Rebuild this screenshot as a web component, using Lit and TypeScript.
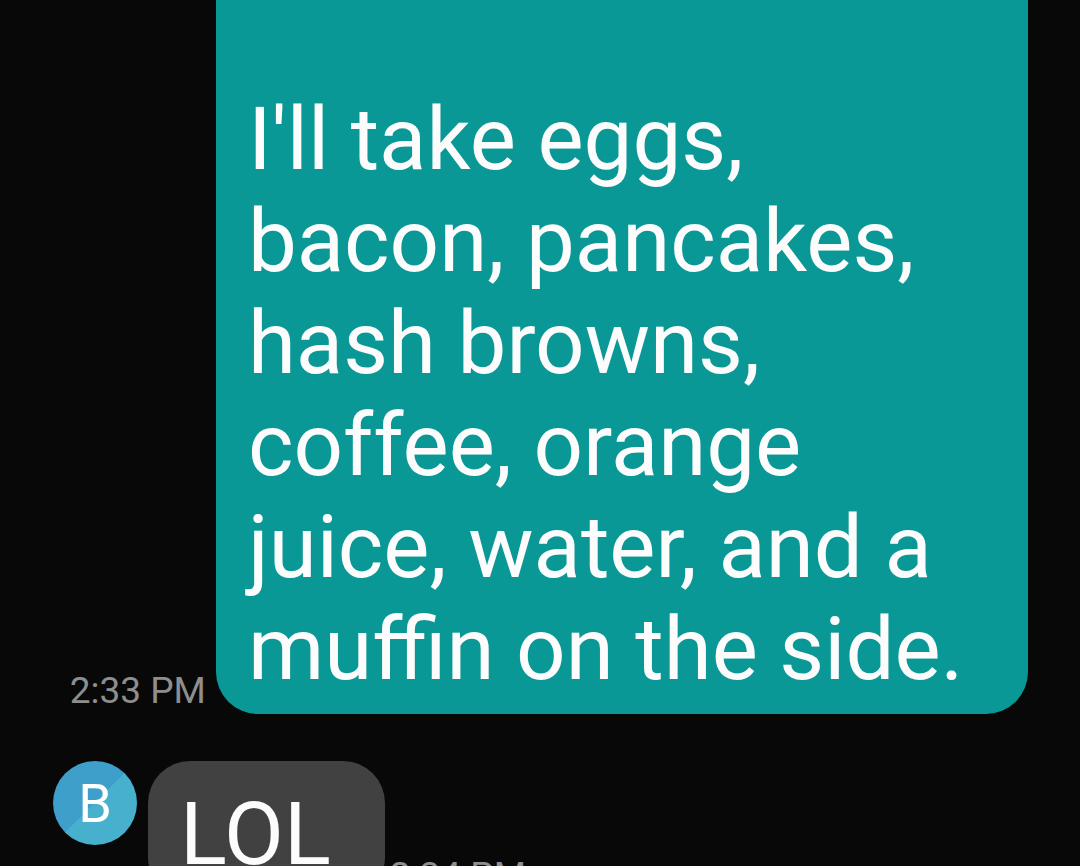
import { LitElement, html, css } from "lit";
import { customElement } from "lit/decorators.js";

@customElement("app-root")
export class AppRoot extends LitElement {
  static styles = css`
    :host {
      display: block;
      height: 100vh;
      overflow: hidden;
      background: #080808;
      font-family: Roboto, sans-serif;
    }
    .thread {
      display: flex;
      flex-direction: column;
      gap: 47px;
    }
    .row {
      display: flex;
    }
    .sent {
      justify-content: flex-end;
      align-items: flex-end;
      gap: 10px;
      padding-right: 52px;
    }
    .received {
      align-items: flex-start;
      padding-left: 53px;
    }
    .bubble {
      box-sizing: border-box;
      margin: 0;
      color: #fcfcfc;
      font-size: 87px;
      line-height: 102px;
    }
    .sent .bubble {
      width: 79%;
      padding: 88px 32px 14px;
      background: #0a9896;
      border-radius: 0 0 42px 42px;
    }
    .received .bubble {
      margin: 0 5px 0 11px;
      padding: 22px 54px 14px 32px;
      background: #414141;
      border-radius: 42px;
    }
    time {
      padding-bottom: 1px;
      color: #8e8e8e;
      font-size: 37px;
      line-height: 44px;
      white-space: nowrap;
    }
    .received time {
      align-self: flex-end;
    }
    .avatar {
      display: flex;
      align-items: center;
      justify-content: center;
      width: 84px;
      height: 84px;
      border-radius: 50%;
      color: #fff;
      font-size: 54px;
      background: linear-gradient(135deg, #3d9fca 50%, #46b0cd 50%);
    }
  `;

  render() {
    return html`
      <main class="thread">
        <article class="row sent">
          <time>2:33 PM</time>
          <p class="bubble">I'll take eggs, bacon, pancakes, hash browns, coffee, orange juice, water, and a muffin on the side.</p>
        </article>
        <article class="row received">
          <span class="avatar">B</span>
          <p class="bubble">LOL</p>
          <time>2:34 PM</time>
        </article>
      </main>
    `;
  }
}
